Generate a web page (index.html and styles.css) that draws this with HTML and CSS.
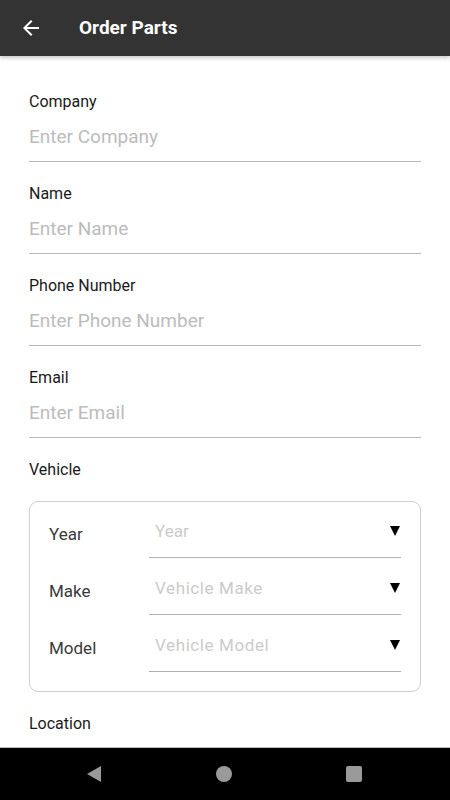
FILE: index.html
```html
<!DOCTYPE html>
<html>
<head>
<meta charset="utf-8">
<link rel="stylesheet" href="styles.css">
</head>
<body>
<div class="screen">
  <header class="appbar">
    <svg class="back" viewBox="0 0 24 24" width="24" height="24"><path fill="#fff" d="M20 11H7.83l5.59-5.59L12 4l-8 8 8 8 1.41-1.41L7.83 13H20v-2z"/></svg>
    <h1 class="title">Order Parts</h1>
  </header>
  <main class="content">
    <div class="field">
      <div class="label">Company</div>
      <div class="input">Enter Company</div>
    </div>
    <div class="field">
      <div class="label">Name</div>
      <div class="input">Enter Name</div>
    </div>
    <div class="field">
      <div class="label">Phone Number</div>
      <div class="input">Enter Phone Number</div>
    </div>
    <div class="field">
      <div class="label">Email</div>
      <div class="input">Enter Email</div>
    </div>
    <div class="label">Vehicle</div>
    <div class="vehicle">
      <div class="row">
        <div class="vlabel">Year</div>
        <div class="select"><span class="ph-small">Year</span><svg class="caret" viewBox="0 0 10 10" width="10" height="10"><polygon points="0,0 10,0 5,10" fill="#000"/></svg></div>
      </div>
      <div class="row">
        <div class="vlabel">Make</div>
        <div class="select"><span>Vehicle Make</span><svg class="caret" viewBox="0 0 10 10" width="10" height="10"><polygon points="0,0 10,0 5,10" fill="#000"/></svg></div>
      </div>
      <div class="row">
        <div class="vlabel">Model</div>
        <div class="select"><span>Vehicle Model</span><svg class="caret" viewBox="0 0 10 10" width="10" height="10"><polygon points="0,0 10,0 5,10" fill="#000"/></svg></div>
      </div>
    </div>
    <div class="label loc">Location</div>
  </main>
  <nav class="navbar">
    <svg viewBox="0 0 16 16" width="16" height="16"><polygon points="15,0 15,16 1,8" fill="#9a9a9a"/></svg>
    <svg viewBox="0 0 16 16" width="16" height="16"><circle cx="8" cy="8" r="8" fill="#9a9a9a"/></svg>
    <svg viewBox="0 0 16 16" width="16" height="16"><rect x="0" y="0" width="16" height="16" rx="2" fill="#9a9a9a"/></svg>
  </nav>
</div>
</body>
</html>
```
FILE: styles.css
```css
* { box-sizing: border-box; }
html, body { margin: 0; padding: 0; }
body {
  font-family: Roboto, "Noto Sans", "Liberation Sans", sans-serif;
  background: #fff;
}
.screen {
  width: 450px;
  height: 800px;
  display: flex;
  flex-direction: column;
  overflow: hidden;
}
.appbar {
  height: 56px;
  flex: 0 0 56px;
  background: #333333;
  display: flex;
  align-items: center;
  padding-left: 19px;
  box-shadow: 0 2px 4px rgba(0,0,0,0.22);
  position: relative;
  z-index: 1;
}
.back { display: block; }
.title {
  margin: 0 0 0 36px;
  color: #fff;
  font-size: 19px;
  font-weight: 700;
  line-height: 24px;
}
.content {
  flex: 1 1 auto;
  overflow: hidden;
  padding: 35px 29px 0 29px;
}
.field { margin-bottom: 21px; }
.label {
  font-size: 16px;
  line-height: 20px;
  padding-top: 1px;
  color: #1a1a1a;
}
.input {
  font-size: 19px;
  line-height: 24px;
  color: #bcbcbc;
  padding: 13px 0 12px 0;
  border-bottom: 1px solid #b8b8b8;
}
.vehicle {
  margin-top: 21px;
  border: 1px solid #cfcfcf;
  border-radius: 9px;
  padding: 8px 19px 19px 19px;
}
.row {
  display: flex;
  align-items: flex-start;
}
.row + .row { margin-top: 9px; }
.vlabel {
  width: 100px;
  flex: 0 0 100px;
  font-size: 17px;
  line-height: 20px;
  color: #3a3a3a;
  padding-top: 14px;
}
.select {
  flex: 1 1 auto;
  display: flex;
  align-items: center;
  justify-content: space-between;
  padding: 11px 0 16px 6px;
  border-bottom: 1px solid #b0b0b0;
  font-size: 17px;
  letter-spacing: 0.6px;
  line-height: 20px;
  color: #cbcbcb;
}
.select .ph-small { font-size: 17px; letter-spacing: 0; }
.caret { display: block; margin-right: 1px; }
.loc { margin-top: 21px; }
.navbar {
  flex: 0 0 53px;
  height: 53px;
  background: #000;
  border-top: 1px solid #bdbdbd;
  display: flex;
  align-items: center;
  justify-content: space-between;
  padding: 0 88px 0 86px;
}
.navbar svg { display: block; }
```
